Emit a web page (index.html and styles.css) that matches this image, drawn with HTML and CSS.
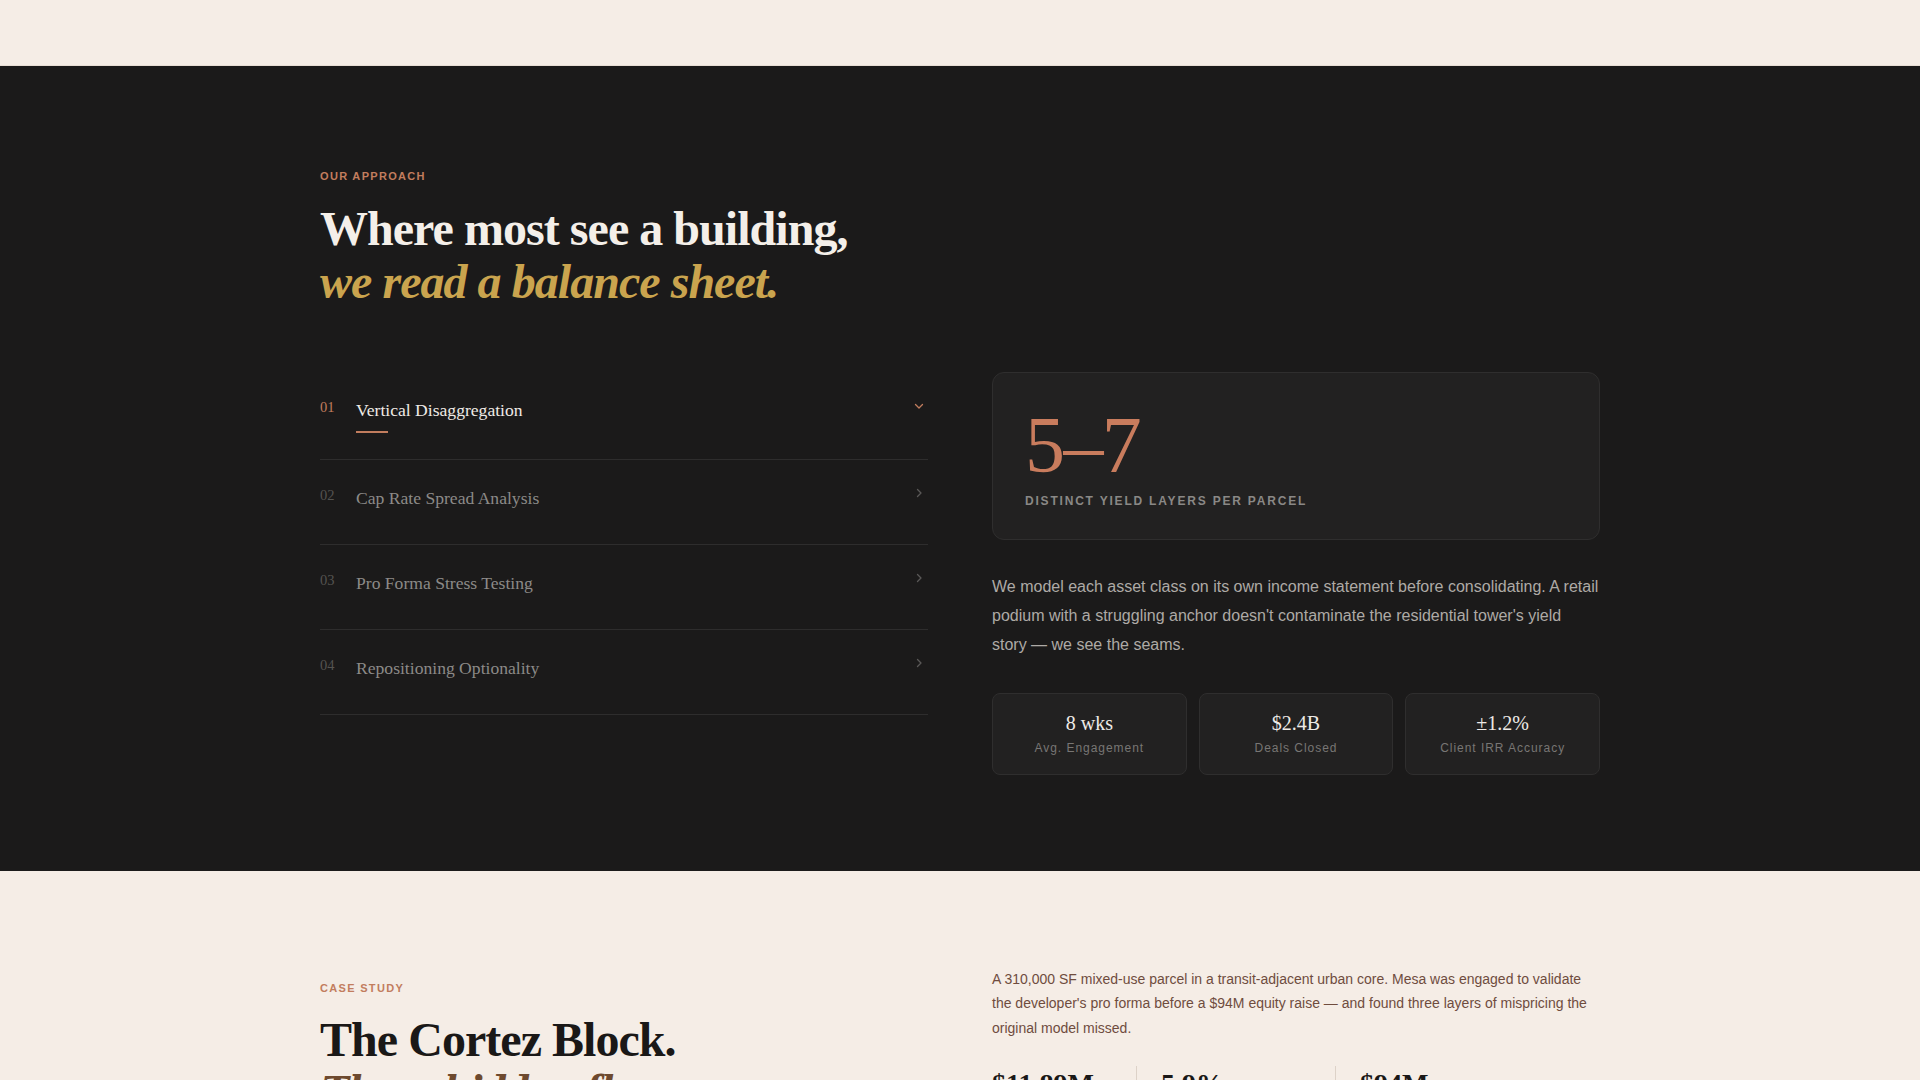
FILE: index.html
```html
<!DOCTYPE html>
<html lang="en">
<head>
    <meta charset="UTF-8">
    <meta name="viewport" content="width=device-width, initial-scale=1.0">
    <title>Mesa — Approach</title>
    <link rel="stylesheet" href="styles.css">
</head>
<body>
    <!-- top bar -->
    <header class="topbar"></header>

    <!-- approach section -->
    <section class="approach">
        <div class="container">
            <p class="eyebrow">Our Approach</p>
            <h2 class="headline">Where most see a building,<br><em>we read a balance sheet.</em></h2>

            <div class="approach-grid">
                <ul class="accordion">
                    <li class="acc-item active">
                        <span class="acc-num">01</span>
                        <span class="acc-title">Vertical Disaggregation</span>
                        <svg class="acc-icon" viewBox="0 0 12 12"><polyline points="2.5,4.5 6,8 9.5,4.5"/></svg>
                    </li>
                    <li class="acc-item">
                        <span class="acc-num">02</span>
                        <span class="acc-title">Cap Rate Spread Analysis</span>
                        <svg class="acc-icon" viewBox="0 0 12 12"><polyline points="4.5,2.5 8,6 4.5,9.5"/></svg>
                    </li>
                    <li class="acc-item">
                        <span class="acc-num">03</span>
                        <span class="acc-title">Pro Forma Stress Testing</span>
                        <svg class="acc-icon" viewBox="0 0 12 12"><polyline points="4.5,2.5 8,6 4.5,9.5"/></svg>
                    </li>
                    <li class="acc-item">
                        <span class="acc-num">04</span>
                        <span class="acc-title">Repositioning Optionality</span>
                        <svg class="acc-icon" viewBox="0 0 12 12"><polyline points="4.5,2.5 8,6 4.5,9.5"/></svg>
                    </li>
                </ul>

                <div class="approach-detail">
                    <div class="figure-card">
                        <div class="figure">5–7</div>
                        <div class="figure-label">Distinct yield layers per parcel</div>
                    </div>
                    <p class="detail-text">We model each asset class on its own income statement before consolidating. A retail podium with a struggling anchor doesn't contaminate the residential tower's yield story — we see the seams.</p>
                    <div class="mini-stats">
                        <div class="mini-stat">
                            <div class="mini-value">8 wks</div>
                            <div class="mini-label">Avg. Engagement</div>
                        </div>
                        <div class="mini-stat">
                            <div class="mini-value">$2.4B</div>
                            <div class="mini-label">Deals Closed</div>
                        </div>
                        <div class="mini-stat">
                            <div class="mini-value">±1.2%</div>
                            <div class="mini-label">Client IRR Accuracy</div>
                        </div>
                    </div>
                </div>
            </div>
        </div>
    </section>

    <!-- case study -->
    <section class="case">
        <div class="container case-grid">
            <div class="case-intro">
                <p class="eyebrow">Case Study</p>
                <h2 class="case-title">The Cortez Block.<br><em>Three hidden flaws.</em></h2>
            </div>
            <div class="case-body">
                <p class="case-text">A 310,000 SF mixed-use parcel in a transit-adjacent urban core. Mesa was engaged to validate the developer's pro forma before a $94M equity raise — and found three layers of mispricing the original model missed.</p>
                <div class="case-stats">
                    <div class="case-stat">
                        <div class="case-value">$11.89M</div>
                        <div class="case-label">NOI restated</div>
                    </div>
                    <div class="case-stat">
                        <div class="case-value">5.9%</div>
                        <div class="case-label">Blended cap rate</div>
                    </div>
                    <div class="case-stat">
                        <div class="case-value">$94M</div>
                        <div class="case-label">Equity raise</div>
                    </div>
                </div>
            </div>
        </div>
    </section>
</body>
</html>
```

FILE: styles.css
```css
* {
    box-sizing: border-box;
}

body {
    margin: 0;
    font-family: "Liberation Sans", Arial, sans-serif;
    background-color: #f5ede6;
    color: #1a1a1a;
}

.container {
    width: 1280px;
    margin: 0 auto;
}

/* top bar */
.topbar {
    height: 66px;
    background-color: #f5ede6;
    border-bottom: 1px solid #e8ded5;
}

.eyebrow {
    margin: 0;
    font-size: 11px;
    line-height: 16px;
    font-weight: bold;
    letter-spacing: 0.12em;
    text-transform: uppercase;
    color: #c27d5e;
}

/* approach */
.approach {
    background-color: #1b1a1a;
    padding: 102px 0 96px;
}

.headline {
    margin: 19px 0 0;
    font-family: "Liberation Serif", "Times New Roman", serif;
    font-size: 48px;
    line-height: 1.1;
    font-weight: bold;
    letter-spacing: -0.02em;
    color: #f4efe9;
}

.headline em {
    color: #caa44e;
}

.approach-grid {
    display: grid;
    grid-template-columns: 1fr 1fr;
    gap: 64px;
    margin-top: 63px;
    align-items: start;
}

.accordion {
    list-style: none;
    margin: 0;
    padding: 0;
}

.acc-item {
    display: flex;
    align-items: flex-start;
    padding: 24px 0 32px;
    border-bottom: 1px solid #2e2d2d;
    cursor: pointer;
}

.acc-item.active {
    padding-bottom: 35px;
}

.acc-num {
    width: 36px;
    flex-shrink: 0;
    margin-top: 4px;
    font-family: "Liberation Serif", serif;
    font-size: 14.5px;
    line-height: 1;
    color: #555350;
}

.acc-title {
    position: relative;
    flex: 1;
    font-family: "Liberation Serif", "Times New Roman", serif;
    font-size: 17.6px;
    line-height: 28px;
    color: #8c8a88;
}

.acc-icon {
    width: 12px;
    height: 12px;
    margin: 3px 3px 0 0;
    fill: none;
    stroke: #5a5857;
    stroke-width: 1.3;
    stroke-linecap: round;
    stroke-linejoin: round;
}

.acc-item.active .acc-num {
    color: #c27d5e;
}

.acc-item.active .acc-title {
    color: #f0ebe6;
}

.acc-item.active .acc-title::after {
    content: "";
    position: absolute;
    left: 0;
    top: calc(100% + 7px);
    width: 32px;
    height: 2px;
    background-color: #c27d5e;
}

.acc-item.active .acc-icon {
    margin-top: 4px;
    stroke: #c27d5e;
}

/* right column */
.figure-card {
    background-color: #222121;
    border: 1px solid #2f2e2e;
    border-radius: 12px;
    padding: 32px 32px 30px;
}

.figure {
    font-family: "Liberation Serif", "Times New Roman", serif;
    font-size: 80px;
    line-height: 1;
    letter-spacing: -0.02em;
    color: #c97c5d;
}

.figure-label {
    margin-top: 8px;
    font-size: 12px;
    line-height: 1.4;
    font-weight: bold;
    letter-spacing: 0.15em;
    text-transform: uppercase;
    color: #8a8886;
}

.detail-text {
    margin: 33px 0 0;
    font-size: 16px;
    line-height: 1.8;
    color: #aeaaa6;
}

.mini-stats {
    display: grid;
    grid-template-columns: repeat(3, 1fr);
    gap: 12px;
    margin-top: 33px;
}

.mini-stat {
    background-color: #222121;
    border: 1px solid #2f2e2e;
    border-radius: 8px;
    padding: 17px 10px;
    text-align: center;
}

.mini-value {
    font-family: "Liberation Serif", "Times New Roman", serif;
    font-size: 20px;
    line-height: 1.2;
    color: #eeeae6;
}

.mini-label {
    margin-top: 5px;
    font-size: 12px;
    line-height: 1.4;
    letter-spacing: 0.08em;
    color: #787674;
}

/* case study */
.case {
    background-color: #f5ede6;
    padding: 96px 0;
}

.case-grid {
    display: grid;
    grid-template-columns: 1fr 1fr;
    gap: 64px;
}

.case-intro {
    padding-top: 13px;
}

.eyebrow + .case-title {
    margin-top: 18px;
}

.case-title {
    margin: 0;
    font-family: "Liberation Serif", "Times New Roman", serif;
    font-size: 48px;
    line-height: 1.1;
    font-weight: bold;
    letter-spacing: -0.02em;
    color: #1a1817;
}

.case-title em {
    color: #6e4a2f;
}

.case-text {
    margin: 0;
    font-size: 14px;
    line-height: 1.75;
    color: #6f4c3e;
}

.case-stats {
    display: grid;
    grid-template-columns: 144px 199px 1fr;
    margin-top: 26px;
}

.case-stat {
    padding: 0 24px;
    border-left: 1px solid #ddd2c8;
}

.case-stat:first-child {
    padding-left: 0;
    border-left: none;
}

.case-value {
    font-family: "Liberation Serif", "Times New Roman", serif;
    font-size: 28px;
    line-height: 1.3;
    font-weight: bold;
    color: #1a1817;
}

.case-label {
    margin-top: 4px;
    font-size: 11px;
    letter-spacing: 0.1em;
    text-transform: uppercase;
    color: #8a7668;
}
```
